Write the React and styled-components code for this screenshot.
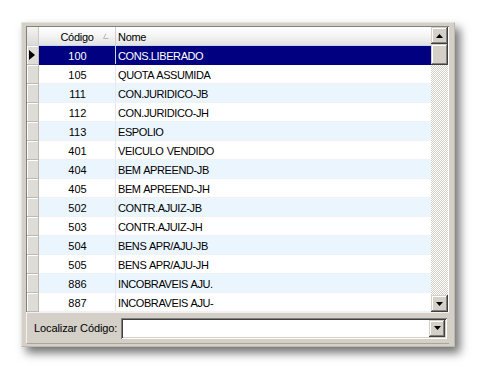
import React from "react";
import styled, { createGlobalStyle } from "styled-components";

const Global = createGlobalStyle`
  html, body { margin: 0; padding: 0; background: #ffffff; }
  body { font-family: "Liberation Sans", Arial, sans-serif; font-size: 11px; color: #000; }
`;

const Page = styled.div`
  padding: 22px 0 0 21px;
  width: 498px;
  height: 390px;
  box-sizing: border-box;
`;

const Frame = styled.div`
  width: 434px;
  height: 325px;
  box-sizing: border-box;
  background: #d4d0c8;
  border-top: 1px solid #e4e2dc;
  border-left: 1px solid #e4e2dc;
  border-right: 1px solid #bcb8b0;
  border-bottom: 1px solid #bcb8b0;
  padding: 3px 5px 0 4px;
  box-shadow: 5px 6px 9px rgba(0, 0, 0, 0.55);
  display: flex;
  flex-direction: column;
`;

const GridBox = styled.div`
  display: flex;
  width: 423px;
  height: 286px;
  box-sizing: border-box;
  border-top: 1px solid #808080;
  border-left: 1px solid #808080;
  background: #fff;
`;

const GridBody = styled.div`
  width: 404px;
  display: flex;
  flex-direction: column;
`;

const Header = styled.div`
  display: flex;
  height: 19px;
  box-sizing: border-box;
  border-bottom: 1px solid #c9d6e6;
  background: linear-gradient(#ffffff 0%, #f6f6f6 45%, #e3e3e3 100%);
`;

const IndHead = styled.div`
  width: 12px;
  box-sizing: border-box;
  border-right: 1px solid #c8c8c8;
  background: linear-gradient(#f4f3f0, #dcdad4);
`;

const HeadCell = styled.div`
  position: relative;
  width: ${(p) => (p.$w ? `${p.$w}px` : "auto")};
  flex: ${(p) => (p.$w ? "none" : "1")};
  box-sizing: border-box;
  border-right: ${(p) => (p.$w ? "1px solid #cfcfcf" : "none")};
  display: flex;
  align-items: center;
  justify-content: ${(p) => (p.$center ? "center" : "flex-start")};
  padding: 1px 0 0 ${(p) => (p.$center ? "0" : "2px")};
  letter-spacing: -0.3px;
  color: #000;
`;

const SortMark = styled.svg`
  position: absolute;
  right: 6px;
  top: 6px;
`;

const Row = styled.div`
  display: flex;
  height: 19px;
  box-sizing: border-box;
  border-bottom: 1px solid ${(p) => (p.$sel ? "#000080" : "#eef2f7")};
  background: ${(p) => (p.$sel ? "#000080" : p.$alt ? "#ebf5fe" : "#ffffff")};
  color: ${(p) => (p.$sel ? "#ffffff" : "#000000")};
`;

const IndCell = styled.div`
  width: 12px;
  height: 19px;
  margin-bottom: -1px;
  box-sizing: border-box;
  background: #dedcd6;
  border-bottom: 1px solid #bdb9b1;
  border-right: 1px solid #bdb9b1;
  box-shadow: inset 1px 1px #ffffff;
  display: flex;
  align-items: center;
  padding-left: 2px;
`;

const CodeCell = styled.div`
  width: 77px;
  box-sizing: border-box;
  border-right: 1px solid ${(p) => (p.$sel ? "#c8d4e4" : "#e2e8f0")};
  display: flex;
  align-items: center;
  justify-content: center;
  padding: 2px 0 0 1px;
`;

const NameCell = styled.div`
  flex: 1;
  display: flex;
  align-items: center;
  padding: 2px 0 0 2px;
  letter-spacing: -0.4px;
  word-spacing: 0.5px;
  white-space: pre;
`;

const ScrollBar = styled.div`
  width: 17px;
  display: flex;
  flex-direction: column;
`;

const raised = `
  background: #d4d0c8;
  box-shadow: inset -1px -1px #404040, inset 1px 1px #d4d0c8,
    inset -2px -2px #808080, inset 2px 2px #ffffff;
`;

const SBtn = styled.div`
  ${raised}
  width: 17px;
  height: 17px;
  flex: none;
  display: flex;
  align-items: center;
  justify-content: center;
`;

const Thumb = styled.div`
  ${raised}
  width: 17px;
  height: 21px;
  flex: none;
`;

const Track = styled.div`
  flex: 1;
  background-color: #ffffff;
  background-image: repeating-conic-gradient(#d4d0c8 0 25%, #ffffff 0 50%);
  background-size: 2px 2px;
`;

const Footer = styled.div`
  height: 32px;
  width: 423px;
  box-sizing: border-box;
  border-top: 1px solid #f2f1ed;
  border-left: 1px solid #f2f1ed;
  border-bottom: 1px solid #aaa69e;
  display: flex;
  align-items: center;
  padding: 0 2px 0 7px;
  gap: 4px;
`;

const Label = styled.span`
  white-space: nowrap;
  letter-spacing: -0.1px;
  color: #000;
`;

const Combo = styled.div`
  flex: 1;
  height: 21px;
  box-sizing: border-box;
  background: #fff;
  box-shadow: inset 1px 1px #808080, inset -1px -1px #ffffff,
    inset 2px 2px #404040, inset -2px -2px #d4d0c8;
  display: flex;
  justify-content: flex-end;
  padding: 2px;
`;

const ComboBtn = styled(SBtn)`
  width: 16px;
  height: 17px;
`;

const Arrow = ({ down }) => (
  <svg width="7" height="4" viewBox="0 0 7 4">
    <polygon points={down ? "0,0 7,0 3.5,4" : "0,4 7,4 3.5,0"} fill="#000" />
  </svg>
);

const rows = [
  ["100", "CONS.LIBERADO"],
  ["105", "QUOTA ASSUMIDA"],
  ["111", "CON.JURIDICO-JB"],
  ["112", "CON.JURIDICO-JH"],
  ["113", "ESPOLIO"],
  ["401", "VEICULO VENDIDO"],
  ["404", "BEM APREEND-JB"],
  ["405", "BEM APREEND-JH"],
  ["502", "CONTR.AJUIZ-JB"],
  ["503", "CONTR.AJUIZ-JH"],
  ["504", "BENS APR/AJU-JB"],
  ["505", "BENS APR/AJU-JH"],
  ["886", "INCOBRAVEIS AJU."],
  ["887", "INCOBRAVEIS AJU-"],
];

export default function App() {
  return (
    <Page>
      <Global />
      <Frame>
        <GridBox>
          <GridBody>
            <Header>
              <IndHead />
              <HeadCell $w={77} $center>
                Código
                <SortMark width="6" height="6" viewBox="0 0 6 6">
                  <path d="M3 0.5 L0.5 5.5 L5.5 5.5" fill="none" stroke="#b8b8b8" strokeWidth="1" />
                </SortMark>
              </HeadCell>
              <HeadCell>Nome</HeadCell>
            </Header>
            {rows.map(([code, name], i) => (
              <Row key={code} $sel={i === 0} $alt={i % 2 === 0}>
                <IndCell>
                  {i === 0 && (
                    <svg width="6" height="10" viewBox="0 0 6 10">
                      <polygon points="0,0 6,5 0,10" fill="#000" />
                    </svg>
                  )}
                </IndCell>
                <CodeCell $sel={i === 0}>{code}</CodeCell>
                <NameCell>{name}</NameCell>
              </Row>
            ))}
          </GridBody>
          <ScrollBar>
            <SBtn>
              <Arrow />
            </SBtn>
            <Thumb />
            <Track />
            <SBtn>
              <Arrow down />
            </SBtn>
          </ScrollBar>
        </GridBox>
        <Footer>
          <Label>Localizar Código:</Label>
          <Combo>
            <ComboBtn>
              <Arrow down />
            </ComboBtn>
          </Combo>
        </Footer>
      </Frame>
    </Page>
  );
}
